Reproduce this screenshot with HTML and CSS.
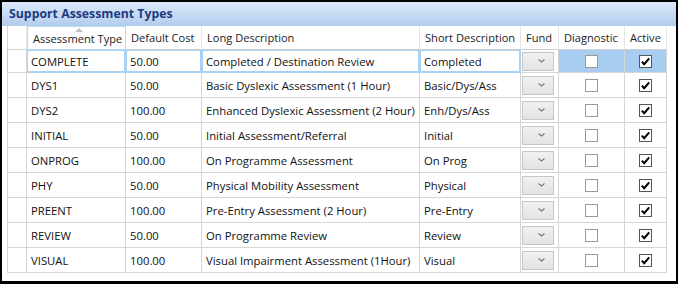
FILE: index.html
```html
<!DOCTYPE html>
<html lang="en">
<head>
  <meta charset="UTF-8">
  <title>Support Assessment Types</title>
  <link rel="stylesheet" href="styles.css">
</head>
<body>
  <div class="window">
    <div class="titlebar">Support Assessment Types</div>
    <div class="gridWrap">
      <div class="row head">
        <div class="cell rowHead"></div>
        <div class="cell sorted"><span class="sortArrow"></span>Assessment Type</div>
        <div class="cell">Default Cost</div>
        <div class="cell">Long Description</div>
        <div class="cell">Short Description</div>
        <div class="cell">Fund</div>
        <div class="cell">Diagnostic</div>
        <div class="cell">Active</div>
      </div>
      <div id="rows"></div>
    </div>
  </div>

  <script>
    const items = [
      ["COMPLETE", "50.00", "Completed / Destination Review", "Completed"],
      ["DYS1", "50.00", "Basic Dyslexic Assessment (1 Hour)", "Basic/Dys/Ass"],
      ["DYS2", "100.00", "Enhanced Dyslexic Assessment (2 Hour)", "Enh/Dys/Ass"],
      ["INITIAL", "50.00", "Initial Assessment/Referral", "Initial"],
      ["ONPROG", "100.00", "On Programme Assessment", "On Prog"],
      ["PHY", "50.00", "Physical Mobility Assessment", "Physical"],
      ["PREENT", "100.00", "Pre-Entry Assessment (2 Hour)", "Pre-Entry"],
      ["REVIEW", "50.00", "On Programme Review", "Review"],
      ["VISUAL", "100.00", "Visual Impairment Assessment (1Hour)", "Visual"],
    ];

    const rows = document.querySelector("#rows");

    const chevron = '<svg width="7" height="4" viewBox="0 0 7 4"><path d="M0.5 0.5 L3.5 3 L6.5 0.5" fill="none" stroke="#777" stroke-width="1.1"/></svg>';
    const check = '<svg width="11" height="11" viewBox="0 0 11 11"><path d="M1.8 5.6 L4.2 8.2 L9.2 2.4" fill="none" stroke="#000" stroke-width="2"/></svg>';

    items.forEach((item, index) => {
      let row = document.createElement("div");
      row.className = index === 0 ? "row selected" : "row";
      row.innerHTML = `
        <div class="cell rowHead"></div>
        <div class="cell text">${item[0]}</div>
        <div class="cell text">${item[1]}</div>
        <div class="cell text">${item[2]}</div>
        <div class="cell text">${item[3]}</div>
        <div class="cell"><span class="combo">${chevron}</span></div>
        <div class="cell center hl"><span class="checkBox"></span></div>
        <div class="cell center hl"><span class="checkBox checked">${check}</span></div>
      `;
      rows.appendChild(row);
    });
  </script>
</body>
</html>
```

FILE: styles.css
```css
body {
  margin: 0;
  font-family: "Open Sans", "Noto Sans", sans-serif;
  font-size: 11.3px;
  color: #111;
}

.window {
  width: 678px;
  height: 284px;
  box-sizing: border-box;
  border: 2px solid #000;
  border-bottom-width: 3px;
  background-color: #fff;
  overflow: hidden;
}

.titlebar {
  height: 24px;
  box-sizing: border-box;
  padding: 3px 0 0 7px;
  background: linear-gradient(#dde9f8, #b2ccee);
  color: #1d3b80;
  font-size: 12.3px;
  font-weight: bold;
}

.gridWrap {
  padding-left: 5px;
}

.row {
  display: grid;
  grid-template-columns: 20px 99px 76px 218px 101px 38px 66px 42px;
  height: 25px;
}

.cell {
  box-sizing: border-box;
  border-right: 1px solid #d6d6d6;
  border-bottom: 1px solid #d6d6d6;
  padding: 0 4px;
  display: flex;
  align-items: center;
  white-space: nowrap;
  overflow: hidden;
}

.cell:first-child {
  border-left: 1px solid #d6d6d6;
}

.head {
  height: 24px;
  font-size: 11.1px;
}

.head .cell {
  position: relative;
  border-right-color: #e6e6e6;
  border-bottom-color: #d0d0d0;
  padding-left: 5px;
  color: #222;
}

.head .cell.sorted {
  border: 1px solid #b9dcf3;
}

.sortArrow {
  position: absolute;
  top: 1px;
  left: 47px;
  border-left: 4px solid transparent;
  border-right: 4px solid transparent;
  border-bottom: 4px solid #b8c4cf;
}

.rowHead {
  padding: 0;
}

.center {
  justify-content: center;
}

.selected {
  height: 23px;
}

.selected .text {
  box-shadow: inset 0 0 0 1px #a9d1f3;
  border-right-color: #a9d1f3;
  border-bottom-color: #a9d1f3;
}

.selected .rowHead {
  border-left-color: #a9d1f3;
}

.selected .hl {
  background-color: #a8cdf0;
}

.combo {
  width: 34px;
  height: 19px;
  box-sizing: border-box;
  margin-left: -3px;
  border: 1px solid #c6c6c6;
  background: linear-gradient(#f1f1f1, #e3e3e3);
  display: flex;
  align-items: center;
  justify-content: flex-end;
  padding-right: 8px;
}

.checkBox {
  width: 13px;
  height: 13px;
  box-sizing: border-box;
  border: 1px solid #9a9a9a;
  background-color: #fff;
  display: flex;
  align-items: center;
  justify-content: center;
}

.checkBox.checked {
  border-color: #555;
}
```
